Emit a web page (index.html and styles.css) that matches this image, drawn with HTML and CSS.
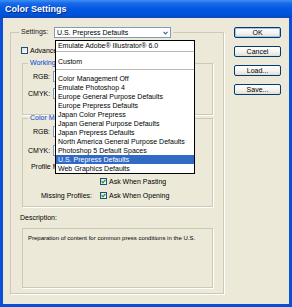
FILE: index.html
```html
<!DOCTYPE html>
<html lang="en">
<head>
  <meta charset="UTF-8">
  <title>Color Settings</title>
  <link rel="stylesheet" href="styles.css">
</head>
<body>

  <div class="window">
    <div class="titlebar">Color Settings</div>

    <div class="content">
      <fieldset class="settings">
        <legend>
          <span class="settings-label">Settings:</span>
          <span class="combo main-combo">
            <span class="combo-text">U.S. Prepress Defaults</span>
            <span class="combo-arrow">
              <svg width="5" height="4" viewBox="0 0 5 4"><polyline points="0.5,0.8 2.5,2.8 4.5,0.8" fill="none" stroke="#4d6185" stroke-width="1.2"/></svg>
            </span>
            <ul class="dropdown">
              <li>Emulate Adobe® Illustrator® 6.0</li>
              <li class="sep"></li>
              <li class="custom">Custom</li>
              <li class="sep sep-2"></li>
              <li class="first">Color Management Off</li>
              <li>Emulate Photoshop 4</li>
              <li>Europe General Purpose Defaults</li>
              <li>Europe Prepress Defaults</li>
              <li>Japan Color Prepress</li>
              <li>Japan General Purpose Defaults</li>
              <li>Japan Prepress Defaults</li>
              <li>North America General Purpose Defaults</li>
              <li>Photoshop 5 Default Spaces</li>
              <li class="selected">U.S. Prepress Defaults</li>
              <li>Web Graphics Defaults</li>
            </ul>
          </span>
        </legend>

        <div class="check-row advanced"><span class="check"></span>Advanced Mode</div>

        <fieldset class="group working">
          <legend>Working Spaces</legend>
          <div class="row rgb"><span class="row-label">RGB:</span><span class="combo small"></span></div>
          <div class="row cmyk"><span class="row-label">CMYK:</span><span class="combo small"></span></div>
        </fieldset>

        <fieldset class="group policies">
          <legend>Color Management Policies</legend>
          <div class="row rgb"><span class="row-label">RGB:</span><span class="combo small"></span></div>
          <div class="row cmyk-2"><span class="row-label">CMYK:</span><span class="combo small"></span></div>
          <div class="row check-line mismatch">
            <span class="row-label wide">Profile Mismatches:</span>
            <span class="check on"><svg width="5" height="5" viewBox="0 0 5 5"><polyline points="0.6,2.2 2,3.8 4.4,0.8" fill="none" stroke="#21a121" stroke-width="1.3"/></svg></span>Ask When Opening
          </div>
          <div class="row check-line paste">
            <span class="row-label wide"></span>
            <span class="check on"><svg width="5" height="5" viewBox="0 0 5 5"><polyline points="0.6,2.2 2,3.8 4.4,0.8" fill="none" stroke="#21a121" stroke-width="1.3"/></svg></span>Ask When Pasting
          </div>
          <div class="row check-line missing">
            <span class="row-label wide">Missing Profiles:</span>
            <span class="check on"><svg width="5" height="5" viewBox="0 0 5 5"><polyline points="0.6,2.2 2,3.8 4.4,0.8" fill="none" stroke="#21a121" stroke-width="1.3"/></svg></span>Ask When Opening
          </div>
        </fieldset>

        <div class="desc-label">Description:</div>
        <div class="desc-box">Preparation of content for common press conditions in the U.S.</div>
      </fieldset>

      <div class="buttons">
        <button class="btn default">OK</button>
        <button class="btn">Cancel</button>
        <button class="btn">Load...</button>
        <button class="btn">Save...</button>
      </div>
    </div>
  </div>

</body>
</html>
```

FILE: styles.css
```css
* {
  box-sizing: border-box;
}

body {
  margin: 0;
  font-family: "Liberation Sans", Arial, sans-serif;
  font-size: 7px;
  color: #000;
}

.window {
  width: 292px;
  height: 307px;
  background: #0a4fd6;
  display: flex;
  flex-direction: column;
}

.titlebar {
  height: 18px;
  padding: 1px 0 0 5px;
  line-height: 17px;
  font-size: 9px;
  font-weight: bold;
  color: #fff;
  text-shadow: 1px 1px 0 #0a2a8a;
  background: linear-gradient(to bottom, #3d8ff5 0%, #1a6ae8 18%, #0058e3 50%, #0053d8 82%, #0a45b8 100%);
}

.content {
  flex: 1;
  margin: 0 3px 3px 3px;
  background: #ece9d8;
  display: flex;
  align-items: flex-start;
  padding: 8px 0 0 7px;
}

/* group boxes */
fieldset {
  margin: 0;
  min-width: 0;
  border: 1px solid #cdc9b5;
  box-shadow: 1px 1px 0 #fff;
}

.settings {
  width: 214px;
  padding: 0 10px 5px 11px;
}

.settings > legend {
  padding: 0 2px;
  margin-left: -3px;
  line-height: 12px;
  height: 12px;
}

.settings-label {
  display: inline-block;
  width: 31px;
  vertical-align: top;
  color: #222;
}

.combo {
  display: inline-block;
  position: relative;
  background: #fff;
  border: 1px solid #7f9db9;
  vertical-align: top;
}

.main-combo {
  width: 117px;
  height: 11px;
  margin-top: 1px;
}

.combo-text {
  display: block;
  padding-left: 2px;
  line-height: 9px;
}

.combo-arrow {
  position: absolute;
  right: 1px;
  top: 1px;
  width: 7px;
  height: 7px;
  display: flex;
  align-items: center;
  justify-content: center;
}

.combo-arrow svg {
  display: block;
}

/* the open list lies over the groups below */
.dropdown {
  position: absolute;
  z-index: 10;
  left: 0;
  top: 12px;
  width: 140px;
  height: 134px;
  margin: 0;
  padding: 0;
  list-style: none;
  background: #fff;
  border: 1px solid #000;
  line-height: 9px;
  white-space: nowrap;
}

.dropdown li {
  height: 9px;
  padding-left: 2px;
}

.dropdown .sep {
  height: 1px;
  margin-top: 1px;
  padding: 0;
  background: #b8b8b8;
}

.dropdown .custom {
  margin-top: 5px;
}

.dropdown .sep-2 {
  margin-top: 3px;
}

.dropdown .first {
  margin-top: 4px;
}

.dropdown .selected {
  background: #316ac5;
  color: #fff;
}

/* checkboxes */
.check {
  display: inline-flex;
  align-items: center;
  justify-content: center;
  width: 7px;
  height: 7px;
  margin-right: 2px;
  border: 1px solid #1c5180;
  background: linear-gradient(135deg, #dcdcd6, #fff);
  vertical-align: top;
  margin-top: 1px;
}

.check svg {
  display: block;
}

.check-row {
  height: 9px;
  line-height: 9px;
  white-space: nowrap;
}

.advanced {
  margin: 8px 0 0 -1px;
}

/* inner groups */
.group {
  width: 191px;
  padding: 0 5px 0 5px;
}

.group > legend {
  padding: 0 2px;
  line-height: 8px;
  color: #0046d5;
  white-space: nowrap;
}

.working {
  margin-top: 4px;
  padding-bottom: 15px;
}

.policies {
  margin-top: -1px;
  padding-bottom: 6px;
}

.row {
  display: flex;
  align-items: center;
  height: 11px;
  white-space: nowrap;
}

.row-label {
  width: 22px;
  text-align: right;
}

.row-label.wide {
  width: 64px;
  margin-right: 8px;
}

.combo.small {
  width: 130px;
  height: 11px;
  margin-left: 3px;
}

.working .rgb,
.policies .rgb {
  margin-top: 4px;
}

.working .cmyk {
  margin-top: 6px;
}

.cmyk-2 {
  margin-top: 8px;
}

.check-line {
  height: 9px;
  line-height: 9px;
}

.check-line .check {
  margin-top: 0;
}

.mismatch {
  margin-top: 6px;
}

.paste {
  margin-top: 6px;
}

.missing {
  margin-top: 5px;
}

/* description */
.desc-label {
  margin: 6px 0 0 -2px;
  line-height: 9px;
}

.desc-box {
  width: 191px;
  height: 60px;
  margin-top: 6px;
  padding: 5px 5px 0 5px;
  border: 1px solid #cdc9b5;
  box-shadow: 1px 1px 0 #fff;
  font-size: 6px;
  line-height: 8px;
  white-space: nowrap;
}

/* buttons */
.buttons {
  display: flex;
  flex-direction: column;
  margin-left: 10px;
  padding-top: 1px;
}

.btn {
  width: 47px;
  height: 11px;
  margin: 0 0 8px 0;
  padding: 0;
  border: 1px solid #003c74;
  border-radius: 2px;
  background: linear-gradient(to bottom, #fff 0%, #f4f3ee 55%, #e2ddd0 100%);
  font-family: "Liberation Sans", Arial, sans-serif;
  font-size: 7px;
  line-height: 9px;
  color: #000;
}

.btn.default {
  box-shadow: inset 0 0 0 1px #a6c0ec;
}
```
